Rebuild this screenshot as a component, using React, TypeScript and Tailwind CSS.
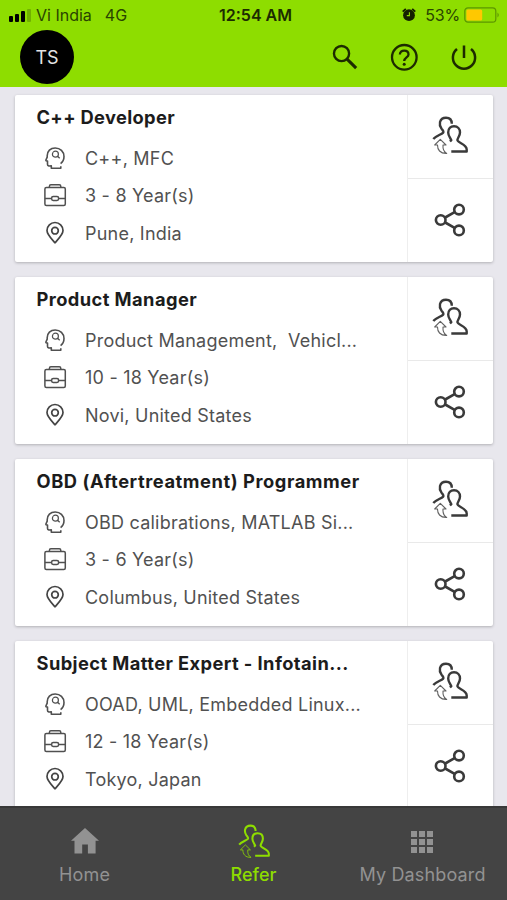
import React from 'react';

const jobs = [
  { title: 'C++ Developer', tracking: 'tracking-[0.35px]', skills: 'C++, MFC', years: '3 - 8 Year(s)', place: 'Pune, India' },
  { title: 'Product Manager', tracking: 'tracking-[0.42px]', skills: 'Product Management,\u00a0 Vehicl...', years: '10 - 18 Year(s)', place: 'Novi, United States' },
  { title: 'OBD (Aftertreatment) Programmer', tracking: 'tracking-[0.56px]', skills: 'OBD calibrations, MATLAB Si...', years: '3 - 6 Year(s)', place: 'Columbus, United States' },
  { title: 'Subject Matter Expert - Infotain...', tracking: 'tracking-[0.41px]', skills: 'OOAD, UML, Embedded Linux...', years: '12 - 18 Year(s)', place: 'Tokyo, Japan' },
];

function ReferIcon({ className, weight }: { className: string; weight: number }) {
  return (
    <svg viewBox="0 0 36 40" className={className} fill="none" stroke="currentColor" strokeWidth={weight} strokeLinejoin="round">
      <path d="M1.3 24C4 20.7 9 19.8 11.2 17.6C12 16.5 10.8 15.4 9.5 13.6C8 11.4 7.5 9 8 7C8.7 4.3 11 2.7 14 2.7C17.5 2.7 19.8 5 19.8 8.8" />
      <path d="M18 26.5L19.3 25.2C18.4 22.8 16.2 20.8 16.2 17.4C16.2 13.6 18.6 11.3 22 11.3C25.7 11.3 28 13.8 28 17.4C28 20.7 25.8 22.4 25.4 25C25.5 28 34.7 29 34.7 34.4V36.5H19.3" />
      <path strokeWidth="1.1" opacity="0.8" d="M8.3 24.4L2.7 30H5.5C5.4 34.5 8 38.7 14.7 38.4C11.5 36.6 10.7 33.8 11 30H14Z" />
    </svg>
  );
}

function SkillIcon() {
  return (
    <svg viewBox="0 0 22 24" className="h-6 w-[22px]" fill="none" stroke="#505050" strokeWidth="1.6" strokeLinejoin="round">
      <path d="M16.6 17.6C18.8 16 20 13.7 20 10.6C20 5.5 16.2 2 11.2 2C6.4 2 3.2 5.2 3.2 9.8V11.2L1.9 14C1.8 14.7 2.4 15 3.5 15.1V18.3C3.5 19.8 4.4 20.2 7.3 19.8V22.2H16.8V20.2" />
      <circle cx="11.4" cy="8.2" r="3" strokeWidth="1.2" />
      <path strokeWidth="1.4" d="M13.5 10.3L15.7 12.2" />
    </svg>
  );
}

function CaseIcon() {
  return (
    <svg viewBox="0 0 24 24" className="h-6 w-6" fill="none" stroke="#505050" strokeWidth="1.5">
      <rect x="1.9" y="4.5" width="20.4" height="18" rx="1.5" />
      <path d="M6.4 4.5V3.4C6.4 2.3 6.9 1.8 7.9 1.8H16.3C17.3 1.8 17.8 2.3 17.8 3.4V4.5M1.9 15.5H8.6M15.6 15.5H22.3" />
      <rect x="8.6" y="13.6" width="7" height="3.8" rx="1.6" />
    </svg>
  );
}

function PinIcon() {
  return (
    <svg viewBox="0 0 20 24" className="h-6 w-5" fill="none" stroke="#444" strokeWidth="1.7">
      <path d="M10 21.8C7.2 18.5 2 13.7 2 9.5A8 8 0 0 1 18 9.5C18 13.7 12.8 18.5 10 21.8Z" />
      <circle cx="10" cy="9.7" r="3.3" />
    </svg>
  );
}

function ShareIcon() {
  return (
    <svg viewBox="0 0 32 34" className="mb-[2px] h-[34px] w-8" fill="none" stroke="#3a3a3a" strokeWidth="2.6">
      <path d="M11.2 14.5L20.6 9.2M11.2 19.5L20.6 24.8" />
      <circle cx="6.7" cy="17" r="4.8" />
      <circle cx="25" cy="6.6" r="4.8" />
      <circle cx="25" cy="27.4" r="4.8" />
    </svg>
  );
}

function Row({ icon, children }: { icon: React.ReactNode; children: React.ReactNode }) {
  return (
    <div className="flex h-[37.5px] items-center">
      <span className="ml-[25px] flex w-[30px] justify-center">{icon}</span>
      <span className="ml-[15.5px] pt-[1.5px] whitespace-pre text-[18px] leading-6 tracking-[0.22px] text-[#515151]">{children}</span>
    </div>
  );
}

function JobCard({ job }: { job: (typeof jobs)[number] }) {
  return (
    <article className="mx-auto flex h-[167px] w-[478px] shrink-0 rounded-[2px] bg-white shadow-[0_1px_3px_rgba(0,0,0,0.24)]">
      <div className="w-[392px] shrink-0 pt-[10px]">
        <h2 className={`mb-[10px] ml-[22px] whitespace-nowrap text-[18.3px] leading-6 font-bold text-[#1c1c1c] ${job.tracking}`}>{job.title}</h2>
        <Row icon={<SkillIcon />}>{job.skills}</Row>
        <Row icon={<CaseIcon />}>{job.years}</Row>
        <Row icon={<PinIcon />}>{job.place}</Row>
      </div>
      <div className="flex flex-1 flex-col border-l border-[#eeeeee] text-[#3a3a3a]">
        <div className="flex h-[84px] items-center justify-center border-b border-[#e9e9e9]">
          <ReferIcon className="mb-[3px] h-10 w-9" weight={2.4} />
        </div>
        <div className="flex flex-1 items-center justify-center"><ShareIcon /></div>
      </div>
    </article>
  );
}

export default function App() {
  return (
    <div className="flex h-[900px] w-[507px] flex-col overflow-hidden bg-[#e8e7ed] font-[Inter,'Liberation_Sans',sans-serif]">
      <header className="h-[87px] shrink-0 bg-[#8edd00] text-[#1c2b00]">
        <div className="grid h-[30px] grid-cols-[1fr_auto_1fr] items-center text-[16px] leading-5">
          <div className="flex items-center pl-[9px] text-[#294400]">
            <div className="flex h-[13px] items-end gap-[2px] text-black">
              <i className="h-[6px] w-1 rounded-[1px] bg-current" />
              <i className="h-2 w-1 rounded-[1px] bg-current" />
              <i className="h-[11px] w-1 rounded-[1px] bg-current" />
              <i className="h-[13px] w-1 rounded-[1px] bg-[#71b000]" />
            </div>
            <span className="ml-[5px]">Vi India</span>
            <span className="ml-[13px]">4G</span>
          </div>
          <span className="ml-1 font-semibold text-[#1c2b00]">12:54 AM</span>
          <div className="flex items-center justify-end pr-[7px] text-[#294400]">
            <svg viewBox="0 0 14 14" className="mr-[9px] h-[14px] w-[14px]">
              <path d="M.7 3.6L3.8.8M13.3 3.6L10.2.8" stroke="#142000" strokeWidth="1.8" />
              <circle cx="7" cy="7.2" r="5.9" fill="#142000" />
              <path d="M7.4 4.2V7.6H4.8" fill="none" stroke="#8edd00" strokeWidth="1.1" />
            </svg>
            <span className="tracking-[-0.2px]">53%</span>
            <svg viewBox="0 0 36 16" className="ml-1 h-4 w-9">
              <rect x=".8" y=".8" width="31" height="14.4" rx="3.2" fill="none" stroke="#5c9600" strokeWidth="1.2" />
              <rect x="2.4" y="2.4" width="15.8" height="11.2" rx="1.5" fill="#ffc800" />
              <path d="M33.5 5.5Q36 8 33.5 10.5Z" fill="#5c9600" />
            </svg>
          </div>
        </div>
        <div className="flex h-[57px] items-start pl-5">
          <div className="flex h-[54px] w-[54px] items-center justify-center rounded-full bg-black text-[18px] text-[#e4e4e4]">TS</div>
          <svg viewBox="0 0 24 24" className="mt-[14px] ml-[258px] h-[26px] w-[26px]" fill="none" stroke="#1d2b00">
            <circle cx="8.8" cy="8.8" r="7" strokeWidth="2.2" />
            <path d="M13.9 13.9L22.3 22.3" strokeWidth="2.8" />
          </svg>
          <svg viewBox="0 0 28 28" className="mt-[13px] ml-8 h-7 w-7" fill="none" stroke="#1d2b00" strokeWidth="2.3">
            <circle cx="14.3" cy="14.3" r="12.3" />
            <path d="M9.9 11.5C9.9 9.1 11.6 7.6 14.2 7.6S18.5 9.2 18.5 11.4C18.5 14.3 14.2 14.5 14.2 18" />
            <circle cx="14.2" cy="21.2" r="1.5" fill="#1d2b00" stroke="none" />
          </svg>
          <svg viewBox="0 0 28 28" className="mt-[13px] ml-[31.5px] h-7 w-7" fill="none" stroke="#1d2b00" strokeWidth="2.5">
            <path d="M14 2.5V15M7 6A11.1 11.1 0 1 0 21 6" />
          </svg>
        </div>
      </header>
      <main className="flex min-h-0 flex-1 flex-col gap-[15px] overflow-hidden pt-2">
        {jobs.map((job) => <JobCard key={job.title} job={job} />)}
      </main>
      <nav className="grid h-[94px] shrink-0 grid-cols-3 border-t-2 border-[#383838] bg-[#444444] text-[18px] leading-6 text-[#929292]">
        <div className="flex flex-col items-center">
          <div className="flex h-[55px] items-end pb-[9px]">
            <svg viewBox="0 0 28 26" className="h-[26px] w-7" fill="currentColor"><path d="M14 0L28 12.7H24.6V25.5H16.9V16.5H11.2V25.5H3.5V12.7H0Z" /></svg>
          </div>
          <span className="tracking-[0.2px]">Home</span>
        </div>
        <div className="flex flex-col items-center text-[#8edd00]">
          <div className="flex h-[55px] items-end pb-1"><ReferIcon className="h-[36px] w-8" weight={2.3} /></div>
          <span className="font-medium">Refer</span>
        </div>
        <div className="flex flex-col items-center">
          <div className="flex h-[55px] items-end pb-[10px]">
            <svg viewBox="0 0 22 22" className="mr-[2px] h-[22px] w-[22px]" fill="currentColor">
              {[0, 8, 16].map((y) => [0, 8, 16].map((x) => <rect key={`${x}-${y}`} x={x} y={y} width="6" height="6" />))}
            </svg>
          </div>
          <span className="whitespace-nowrap tracking-[0.15px]">My Dashboard</span>
        </div>
      </nav>
    </div>
  );
}
